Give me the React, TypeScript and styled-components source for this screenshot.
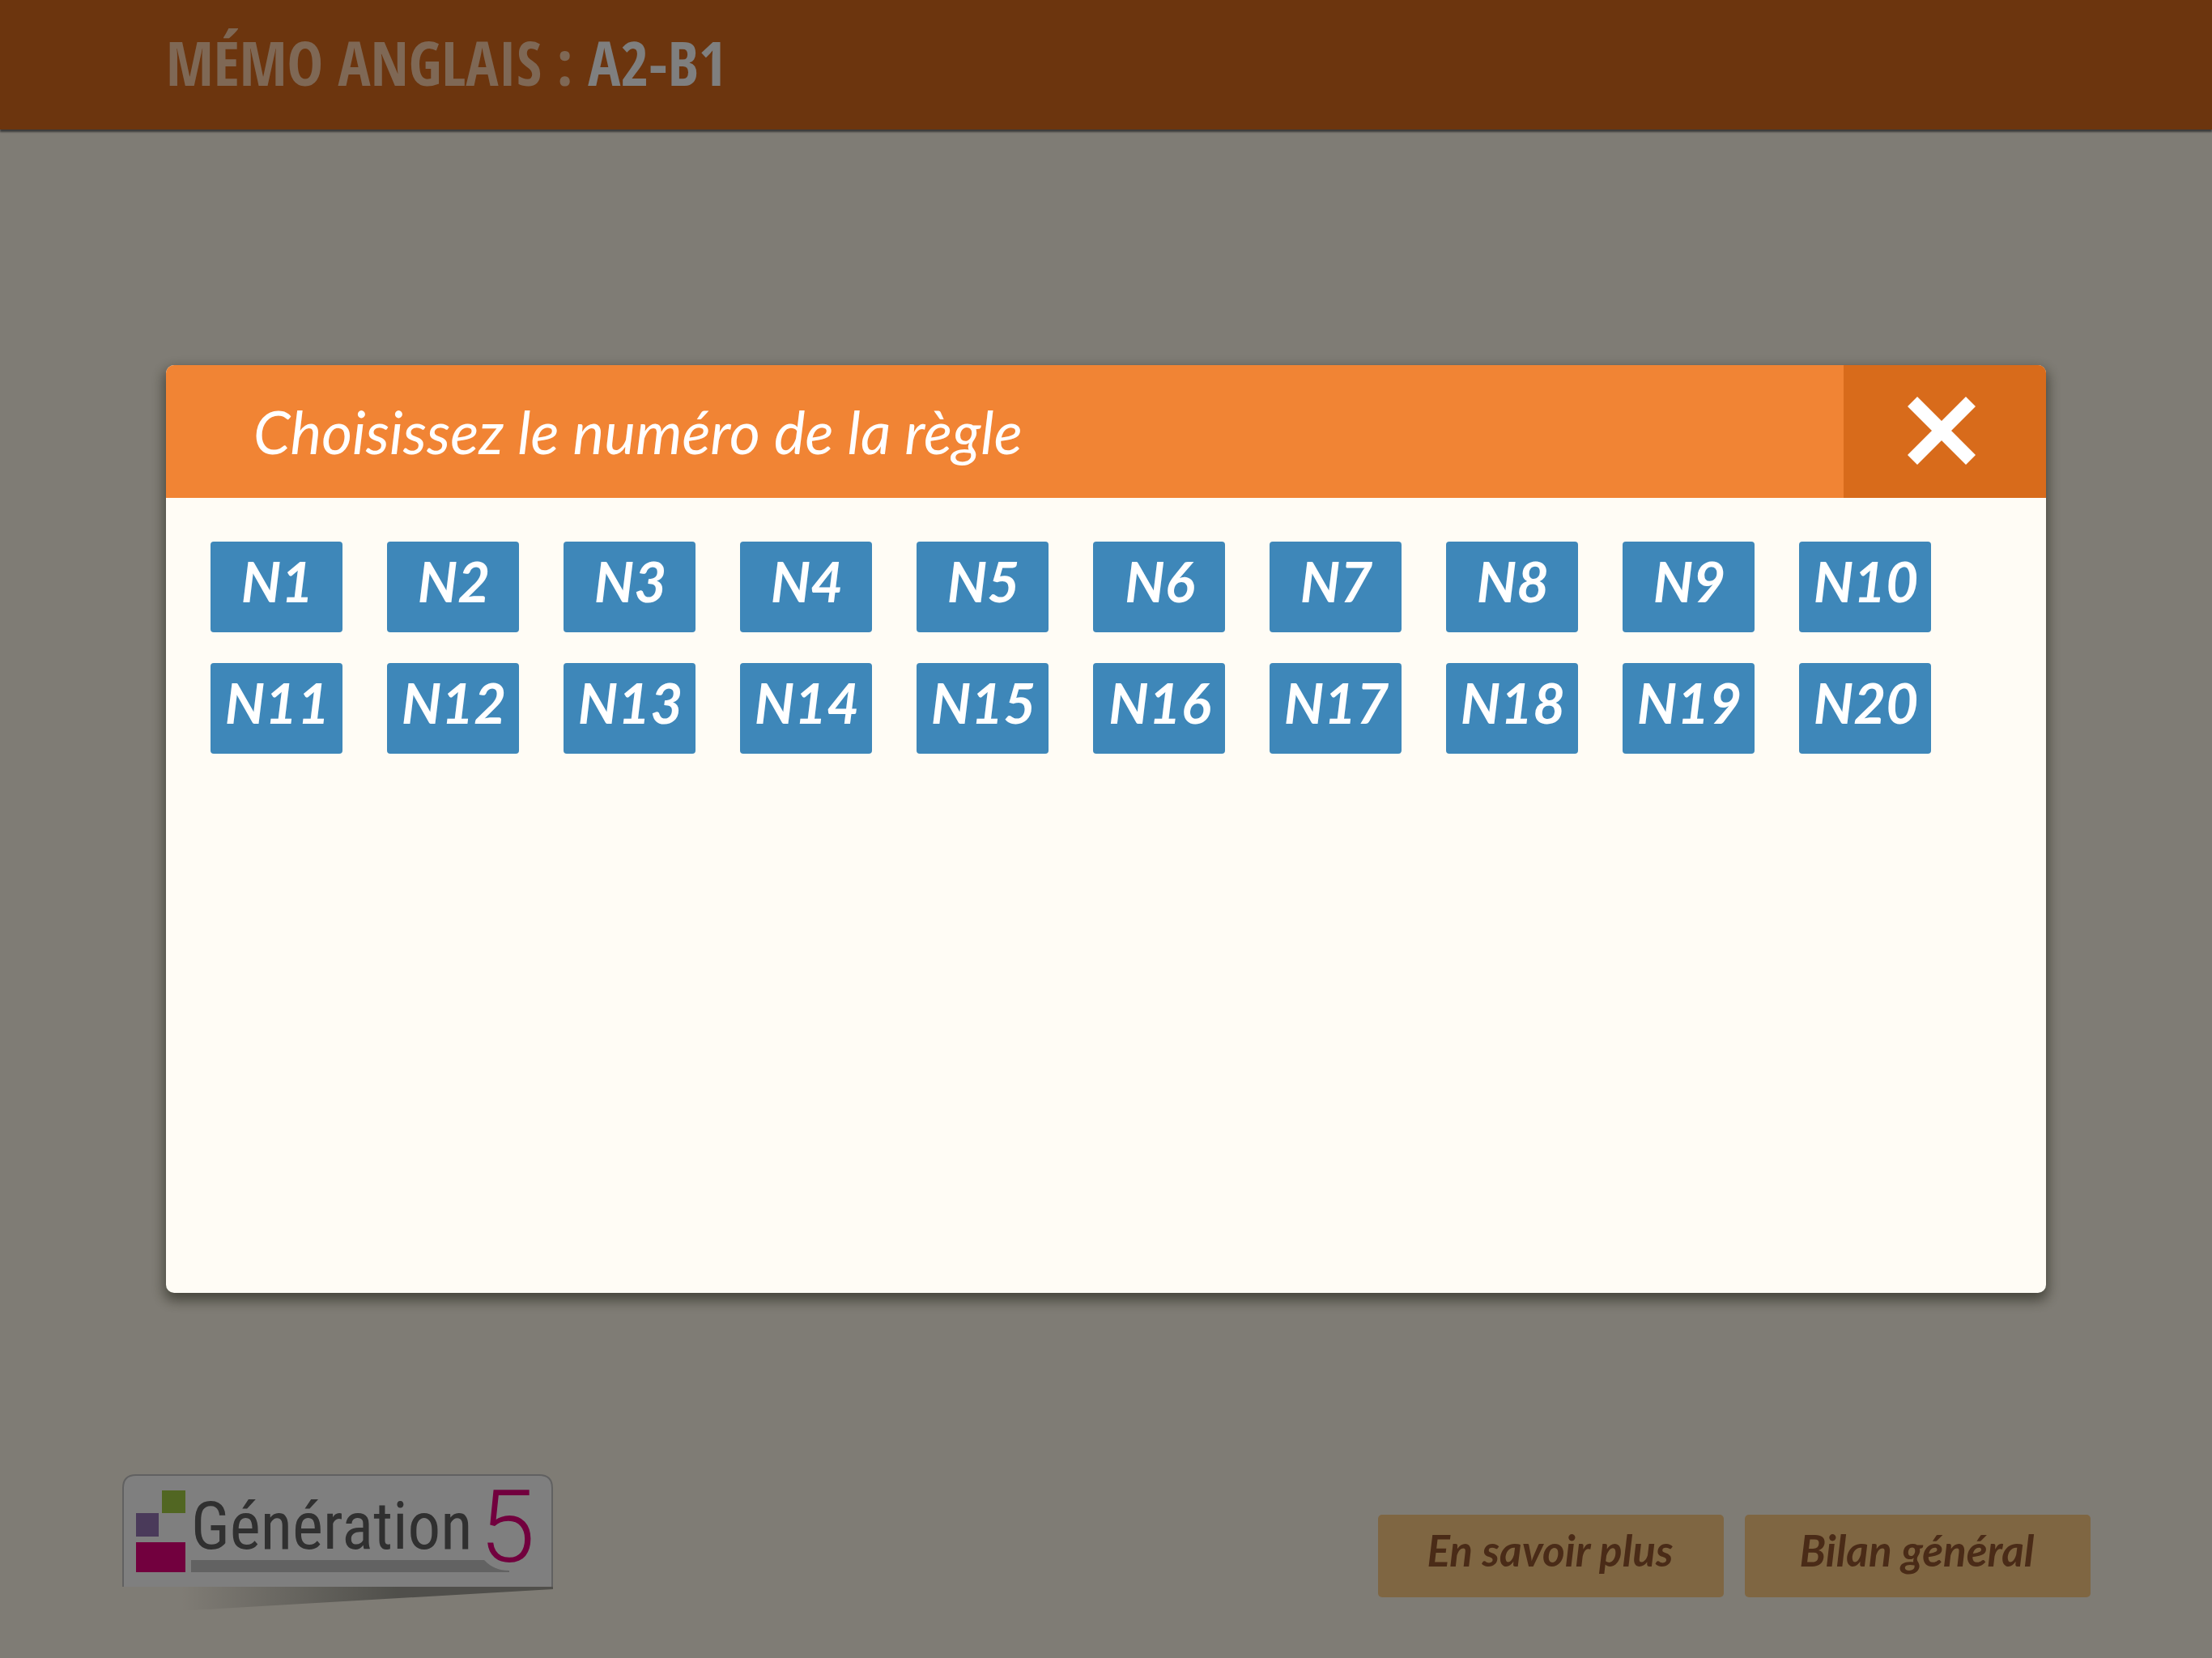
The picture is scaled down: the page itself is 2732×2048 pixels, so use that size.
import React from "react";
import styled, { createGlobalStyle } from "styled-components";

const GlobalStyle = createGlobalStyle`
  * { box-sizing: border-box; }
  body { margin: 0; background: #fff8ea; }
  button { border: 0; margin: 0; cursor: pointer; }
`;

const Page = styled.div`
  min-height: 100vh;
  display: flex;
  flex-direction: column;
  font-family: Lato, "Liberation Sans", sans-serif;
`;

const TopBar = styled.header`
  height: 160px;
  padding: 0 7.5%;
  display: flex;
  align-items: center;
  background: #d86b1d;
  box-shadow: 0 3px 2px #777;
`;

const AppTitle = styled.h1`
  margin: 0;
  padding-bottom: 6px;
  font-family: "Open Sans Condensed", "Roboto Condensed", sans-serif;
  font-size: 75px;
  line-height: 96px;
  font-weight: 700;
  color: #ffd0aa;
`;

const Level = styled.span`
  color: #fff;
`;

const Content = styled.main`
  flex: 1;
`;

const Footer = styled.footer`
  display: flex;
  justify-content: space-between;
  align-items: flex-end;
  padding: 0 150px 56px;
`;

const LogoLink = styled.a`
  display: block;
`;

const LogoDrawing = styled.svg`
  display: block;
  overflow: visible;
  line-height: 1;
`;

const FooterActions = styled.nav`
  display: flex;
  gap: 26px;
  padding-bottom: 19px;
`;

const FooterButton = styled.button`
  width: 427px;
  height: 102px;
  padding: 0 2px 14px 0;
  border-radius: 5px;
  background: #ffcc84;
  color: #94562f;
  font: italic 700 53px/66px Lato, "Liberation Sans", sans-serif;
`;

const Backdrop = styled.div`
  position: fixed;
  inset: 0;
  display: flex;
  align-items: center;
  justify-content: center;
  background: rgba(0, 0, 0, 0.5);
  font-family: Lato, "Liberation Sans", sans-serif;
`;

const Dialog = styled.section`
  width: 85%;
  height: 56vh;
  display: flex;
  flex-direction: column;
  overflow: hidden;
  border-radius: 10px;
  background: #fffcf5;
  box-shadow: 0 7px 16px 2px rgba(30, 32, 20, 0.6);
`;

const DialogHeader = styled.div`
  display: flex;
  height: 164px;
  background: #f18434;
`;

const DialogTitle = styled.h2`
  flex: 1;
  margin: 0;
  padding-left: 108px;
  font-size: 73px;
  line-height: 164px;
  font-style: italic;
  font-weight: 400;
  color: #fff;
`;

const CloseButton = styled.button`
  width: 250px;
  display: flex;
  align-items: center;
  justify-content: center;
  padding: 0 8px 2px 0;
  background: #d86b1b;
`;

const RuleGrid = styled.ul`
  list-style: none;
  margin: 0;
  padding: 54px 55px;
  display: grid;
  grid-template-columns: repeat(auto-fill, 163px);
  gap: 38px 55px;
`;

const RuleButton = styled.button`
  width: 100%;
  height: 112px;
  display: block;
  padding: 0 0 14px 2px;
  border-radius: 4px;
  background: #3e87b9;
  color: #fff;
  font: italic 700 69px/84px Lato, "Liberation Sans", sans-serif;
`;

const rules = Array.from({ length: 20 }, (_, i) => `N${i + 1}`);

function Logo() {
  return (
    <LogoDrawing width="534" height="172" viewBox="0 0 534 172" role="img" aria-label="Génération 5">
      <defs>
        <linearGradient id="fold" x1="0" x2="1" y1="0" y2="0">
          <stop offset="0.14" stopColor="#a09f96" stopOpacity="0" />
          <stop offset="0.64" stopColor="#a09f96" />
        </linearGradient>
      </defs>
      <path d="M0 140H533V143L0 174Z" fill="url(#fold)" />
      <path d="M2 140V18Q2 2 18 2H516Q532 2 532 18V140" fill="#fff" stroke="#c2c2c2" strokeWidth="2" />
      <rect x="50" y="21" width="29" height="28" fill="#a2cc44" />
      <rect x="18" y="49" width="28" height="29" fill="#9474b4" />
      <rect x="18" y="85" width="61" height="37" fill="#e4007c" />
      <path d="M86 107H448Q460 120 479 120V122H86Z" fill="#c4c4c4" />
      <text x="86" y="93" fontFamily="Roboto Condensed, Roboto, sans-serif" fontSize="81" fill="#606060">
        Génération
      </text>
      <text x="442" y="109" fontFamily="Roboto, sans-serif" fontWeight="300" fontSize="124" fill="#e4007c">
        5
      </text>
    </LogoDrawing>
  );
}

export default function App() {
  return (
    <>
      <GlobalStyle />
      <Page>
        <TopBar>
          <AppTitle>
            MÉMO ANGLAIS : <Level>A2-B1</Level>
          </AppTitle>
        </TopBar>
        <Content />
        <Footer>
          <LogoLink href="#">
            <Logo />
          </LogoLink>
          <FooterActions>
            <FooterButton type="button">En savoir plus</FooterButton>
            <FooterButton type="button">Bilan général</FooterButton>
          </FooterActions>
        </Footer>
      </Page>
      <Backdrop>
        <Dialog role="dialog" aria-modal="true" aria-labelledby="rule-title">
          <DialogHeader>
            <DialogTitle id="rule-title">Choisissez le numéro de la règle</DialogTitle>
            <CloseButton type="button" aria-label="Fermer">
              <svg width="84" height="84" viewBox="0 0 84 84" stroke="#fff" strokeWidth="17">
                <path d="M6 6L78 78M78 6L6 78" />
              </svg>
            </CloseButton>
          </DialogHeader>
          <RuleGrid>
            {rules.map((rule) => (
              <li key={rule}>
                <RuleButton type="button">{rule}</RuleButton>
              </li>
            ))}
          </RuleGrid>
        </Dialog>
      </Backdrop>
    </>
  );
}
